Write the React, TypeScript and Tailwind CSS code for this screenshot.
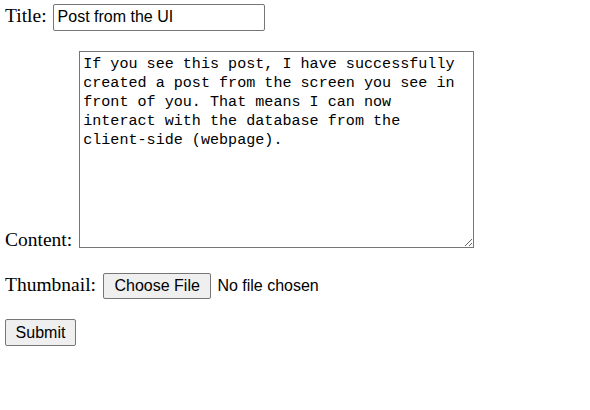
import { useState } from "react";

const App = () => {
  const [title, setTitle] = useState("Post from the UI");
  const [content, setContent] = useState(
    "If you see this post, I have successfully created a post from the screen you see in front of you. That means I can now interact with the database from the client-side (webpage)."
  );

  return (
    <form
      className="min-h-screen bg-white px-[5px] pt-[1px] text-[19.5px] text-black font-['Liberation_Serif',serif]"
      onSubmit={(e) => e.preventDefault()}
    >
      {/* title */}
      <div className="flex items-baseline">
        <label htmlFor="title">Title:</label>
        <input
          id="title"
          type="text"
          value={title}
          onChange={(e) => setTitle(e.target.value)}
          className="ml-[6px] w-[212px] h-[27px] px-[4px] border border-[#767676] rounded-[2px] bg-white text-[16px] font-['Liberation_Sans',Arial,sans-serif] outline-none"
        />
      </div>

      {/* content */}
      <div className="flex items-end mt-[20px]">
        <label htmlFor="content" className="leading-none mb-[-2px]">
          Content:
        </label>
        <textarea
          id="content"
          value={content}
          onChange={(e) => setContent(e.target.value)}
          className="ml-[7px] w-[395px] h-[197px] pl-[3px] pr-[4px] pt-[3px] border border-[#767676] bg-white text-[15.1px] leading-[19px] font-['Liberation_Mono',monospace] outline-none"
        />
      </div>

      {/* thumbnail */}
      <div className="flex items-baseline mt-[22px]">
        <label htmlFor="thumbnail">Thumbnail:</label>
        <input
          id="thumbnail"
          type="file"
          className="ml-[7px] text-[16px] font-['Liberation_Sans',Arial,sans-serif] file:mr-[6px] file:h-[26px] file:px-[10.5px] file:border file:border-solid file:border-[#767676] file:rounded-[2px] file:bg-[#efefef] file:text-black"
        />
      </div>

      {/* submit */}
      <div className="mt-[18px]">
        <button
          type="submit"
          className="w-[71px] h-[27px] border border-[#767676] rounded-[2px] bg-[#efefef] text-[16px] font-['Liberation_Sans',Arial,sans-serif]"
        >
          Submit
        </button>
      </div>
    </form>
  );
};

export default App;
